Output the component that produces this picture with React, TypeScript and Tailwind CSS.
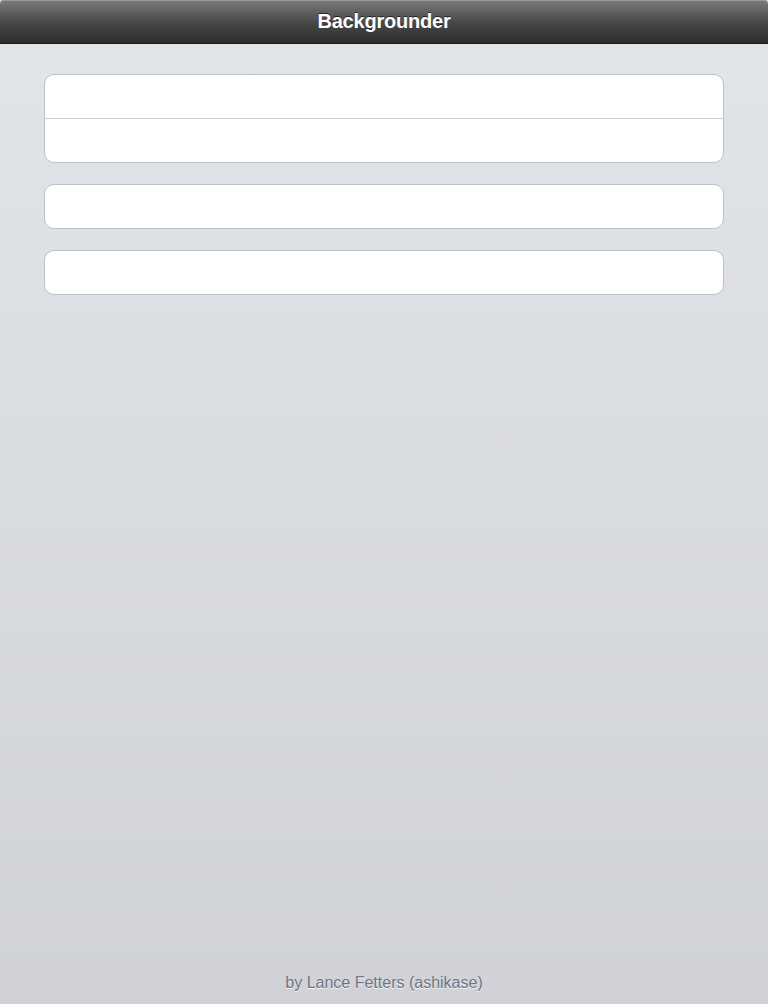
export default function App() {
  return (
    <div
      className="w-[768px] h-[1004px] flex flex-col bg-gradient-to-b from-[#e2e5ea] to-[#d0d2d7] overflow-hidden"
      style={{ fontFamily: '"Liberation Sans", Arial, sans-serif' }}
    >
      <div className="h-[44px] shrink-0 rounded-t-[4px] bg-gradient-to-b from-[#7c7c7c] via-[#4a4a4a] to-[#2c2c2c] border-b border-[#1a1a1a] flex items-center justify-center pb-[2px] shadow-[inset_0_1px_0_#9a9a9a]">
        <span className="text-white font-bold text-[20px] tracking-[-0.2px] [text-shadow:0_-1px_0_rgba(0,0,0,0.6)]">
          Backgrounder
        </span>
      </div>
      <div className="flex-1 flex flex-col px-[44px] pt-[30px]">
        <div className="bg-white border border-[#bfc0c4] rounded-[10px] flex flex-col">
          <div className="h-[43px]" />
          <div className="h-px bg-[#cfcfd2]" />
          <div className="h-[43px]" />
        </div>
        <div className="mt-[21px] bg-white border border-[#bfc0c4] rounded-[10px]">
          <div className="h-[43px]" />
        </div>
        <div className="mt-[21px] bg-white border border-[#bfc0c4] rounded-[10px]">
          <div className="h-[43px]" />
        </div>
      </div>
      <div className="h-[44px] shrink-0 flex items-start justify-center pt-[11px]">
        <span className="text-[16px] text-[#6d7386] [text-shadow:0_1px_0_rgba(255,255,255,0.8)]">
          by Lance Fetters (ashikase)
        </span>
      </div>
    </div>
  );
}
